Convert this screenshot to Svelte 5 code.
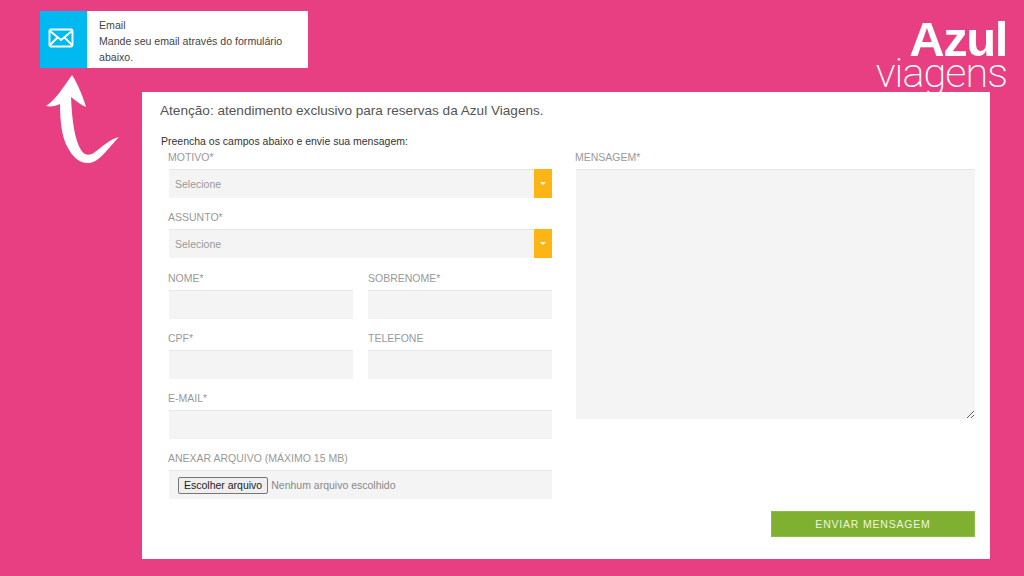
<script>
  const rows = [
    [{ label: 'Nome*' }, { label: 'Sobrenome*' }],
    [{ label: 'CPF*' }, { label: 'Telefone' }],
    [{ label: 'E-mail*' }]
  ];
  const selects = ['Motivo*', 'Assunto*'];
</script>

<div class="page">
  <header class="top">
    <div class="notice">
      <div class="notice-icon">
        <svg width="26" height="20" viewBox="0 0 26 20" fill="none" stroke="#fff" stroke-width="1.9" stroke-linejoin="round">
          <rect x="1.5" y="1.5" width="23" height="17" rx="1.5" />
          <path d="M2 3l11 9 11-9M2 17l8-8M24 17l-8-8" />
        </svg>
      </div>
      <div class="notice-text">
        <p>Email</p>
        <p>Mande seu email através do formulário abaixo.</p>
      </div>
    </div>
    <div class="logo">
      <span class="logo-azul">Azul</span>
      <span class="logo-viagens">viagens</span>
    </div>
  </header>

  <div class="body">
    <div class="arrow">
      <svg width="76" height="92" viewBox="44 74 76 92">
        <path fill="#fff" d="M72 75C66 83 56 100 46 106C51 107 56 106 60 104C60 122 62 138 68 148C73 158 81 164 89 163C100 162 108 148 119 137C110 139 102 147 95 152C90 156 85 156 81 150C75 140 72 122 71 97C76 101 81 105 86 107C83 97 78 84 72 75Z" />
      </svg>
    </div>

    <main class="card">
      <h1>Atenção: atendimento exclusivo para reservas da Azul Viagens.</h1>
      <p class="intro">Preencha os campos abaixo e envie sua mensagem:</p>

      <form class="form" on:submit|preventDefault>
        <div class="col-left">
          {#each selects as name}
            <div class="field">
              <label>{name}</label>
              <div class="select-wrap">
                <select><option>Selecione</option></select>
                <span class="caret"></span>
              </div>
            </div>
          {/each}

          {#each rows as row}
            <div class="row">
              {#each row as f}
                <div class="field">
                  <label>{f.label}</label>
                  <input type="text" />
                </div>
              {/each}
            </div>
          {/each}

          <div class="field">
            <label>Anexar arquivo (máximo 15 MB)</label>
            <div class="file">
              <button type="button" class="file-btn">Escolher arquivo</button>
              <span>Nenhum arquivo escolhido</span>
            </div>
          </div>
        </div>

        <div class="col-right">
          <div class="field">
            <label>Mensagem*</label>
            <textarea></textarea>
          </div>
          <button type="submit" class="send">Enviar mensagem</button>
        </div>
      </form>
    </main>
  </div>
</div>

<style>
  :global(body) {
    margin: 0;
    background: #e83e82;
  }

  .page {
    width: 1024px;
    height: 576px;
    overflow: hidden;
    background: #e83e82;
    font-family: "Liberation Sans", Arial, sans-serif;
  }

  .top {
    display: flex;
    justify-content: space-between;
    height: 92px;
    padding: 11px 17px 0 40px;
    box-sizing: border-box;
  }

  .notice {
    display: flex;
    width: 268px;
    height: 57px;
    background: #fff;
  }

  .notice-icon {
    display: flex;
    align-items: center;
    justify-content: center;
    width: 47px;
    padding: 0 6px 4px 0;
    box-sizing: border-box;
    background: #00b9f1;
  }

  .notice-text {
    flex: 1;
    padding: 6px 12px 0;
    font-size: 10.6px;
    line-height: 16px;
    color: #444;
  }

  .notice-text p {
    margin: 0;
  }

  .logo {
    display: flex;
    flex-direction: column;
    align-items: flex-end;
    color: #fff;
    position: relative;
  }

  .logo-azul {
    font-size: 49px;
    font-weight: 700;
    letter-spacing: -1.4px;
    line-height: 34px;
    margin-top: 11px;
  }

  .logo-viagens {
    font-family: Roboto, sans-serif;
    font-size: 41.5px;
    font-weight: 200;
    letter-spacing: -1px;
    line-height: 33px;
  }

  .body {
    display: flex;
  }

  .arrow {
    width: 142px;
    flex: none;
    margin-top: -18px;
    padding-left: 44px;
    box-sizing: border-box;
  }

  .card {
    width: 848px;
    height: 467px;
    padding: 10px 15px 0 18px;
    box-sizing: border-box;
    background: #fff;
  }

  h1 {
    margin: 0;
    font-size: 13.6px;
    font-weight: 400;
    line-height: 17px;
    color: #555;
  }

  .intro {
    margin: 16px 0 2px 1px;
    font-size: 10.5px;
    line-height: 13px;
    color: #333;
  }

  .form {
    display: flex;
    justify-content: space-between;
    padding-left: 9px;
  }

  .col-left {
    display: flex;
    flex-direction: column;
    gap: 12.3px;
    width: 383px;
  }

  .col-right {
    display: flex;
    flex-direction: column;
    align-items: flex-end;
    width: 399px;
  }

  .col-right .field {
    width: 100%;
  }

  .row {
    display: flex;
    gap: 15px;
  }

  .row .field {
    flex: 1;
  }

  label {
    display: block;
    height: 19px;
    font-size: 10.5px;
    line-height: 15px;
    text-transform: uppercase;
    color: #999;
    margin-left: -1px;
  }

  .row .field + .field label {
    margin-left: 0;
  }

  input,
  select,
  textarea,
  .file {
    display: block;
    width: 100%;
    height: 29px;
    box-sizing: border-box;
    margin: 0;
    border: 0;
    border-top: 1px solid #e6e6e6;
    border-radius: 0;
    background: #f4f4f4;
    font-family: inherit;
    outline: none;
  }

  select {
    appearance: none;
    padding: 0 6px;
    font-size: 10.5px;
    color: #999;
  }

  .select-wrap {
    position: relative;
  }

  .caret {
    position: absolute;
    top: 0;
    right: 0;
    width: 18px;
    height: 29px;
    background: #fdb515;
  }

  .caret::after {
    content: "";
    position: absolute;
    top: 13px;
    left: 6px;
    border: 3px solid transparent;
    border-top-color: #fff;
  }

  textarea {
    height: 250px;
    resize: vertical;
  }

  .file {
    display: flex;
    align-items: center;
    gap: 3px;
    padding: 0 0 0 9px;
    font-size: 10.5px;
    color: #888;
  }

  .file-btn {
    height: 17px;
    padding: 0 5px;
    border: 1px solid #767676;
    border-radius: 2px;
    background: #efefef;
    font: 10.5px "Liberation Sans", Arial, sans-serif;
    color: #222;
  }

  .send {
    width: 204px;
    height: 26px;
    margin-top: 92px;
    border: 1px solid #8fbd4a;
    background: #7fb02f;
    color: #eef5e0;
    font: 10.5px "Liberation Sans", Arial, sans-serif;
    letter-spacing: 0.8px;
    text-transform: uppercase;
  }
</style>
